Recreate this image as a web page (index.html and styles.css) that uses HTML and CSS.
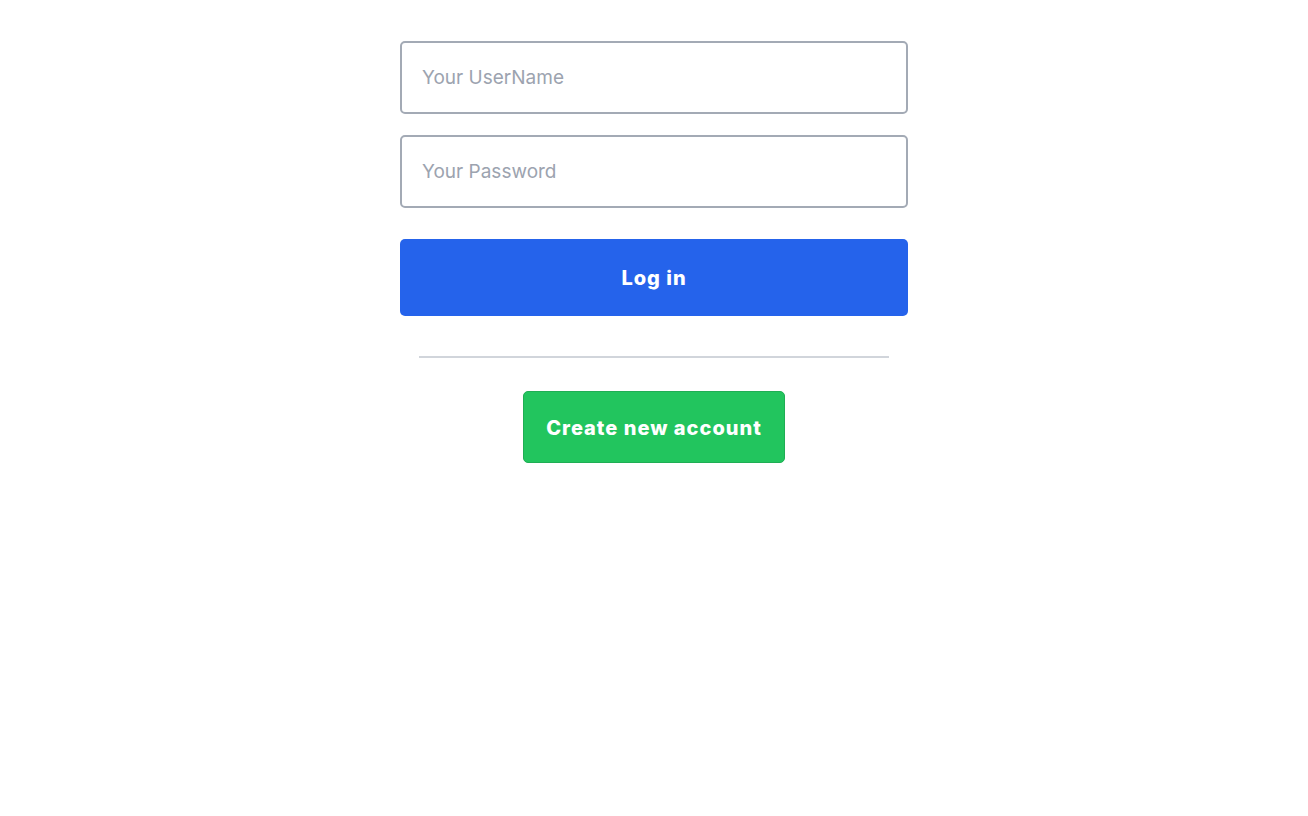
FILE: index.html
```html
<!DOCTYPE html>
<html>
<head>
<meta charset="utf-8">
<link rel="stylesheet" href="styles.css">
</head>
<body>
<main class="page">
  <form class="login">
    <input class="field" type="text" placeholder="Your UserName">
    <input class="field" type="password" placeholder="Your Password">
    <button class="btn-login" type="button">Log in</button>
    <hr class="divider">
    <button class="btn-create" type="button">Create new account</button>
  </form>
</main>
</body>
</html>
```
FILE: styles.css
```css
html, body {
  margin: 0;
  padding: 0;
  background: #ffffff;
  font-family: Inter, "Noto Sans", sans-serif;
}
.page {
  display: flex;
  justify-content: center;
  padding-top: 41px;
}
.login {
  width: 508px;
  display: flex;
  flex-direction: column;
  align-items: center;
}
.field {
  box-sizing: border-box;
  width: 100%;
  height: 73px;
  border: 2px solid #a3aab5;
  border-radius: 5px;
  padding: 0 20px;
  font-family: Inter, "Noto Sans", sans-serif;
  font-size: 19px;
  color: #374151;
  outline: none;
  margin-bottom: 21px;
}
.field::placeholder {
  color: #9ca3af;
}
.field + .field {
  margin-bottom: 31px;
}
.btn-login {
  box-sizing: border-box;
  width: 100%;
  height: 77px;
  border: none;
  border-radius: 5px;
  background: #2563eb;
  color: #ffffff;
  font-family: Inter, "Noto Sans", sans-serif;
  font-weight: 800;
  font-size: 20px;
  letter-spacing: 1px;
  padding-top: 1px;
  cursor: pointer;
}
.divider {
  box-sizing: border-box;
  width: 470px;
  margin: 40px 0 33px;
  border: none;
  border-top: 2px solid #d1d5db;
}
.btn-create {
  box-sizing: border-box;
  width: 262px;
  height: 72px;
  border: 1px solid #1fae54;
  border-radius: 5px;
  background: #22c55e;
  color: #ffffff;
  font-family: Inter, "Noto Sans", sans-serif;
  font-weight: 800;
  font-size: 20px;
  letter-spacing: 1px;
  padding-top: 2px;
  cursor: pointer;
}
```
